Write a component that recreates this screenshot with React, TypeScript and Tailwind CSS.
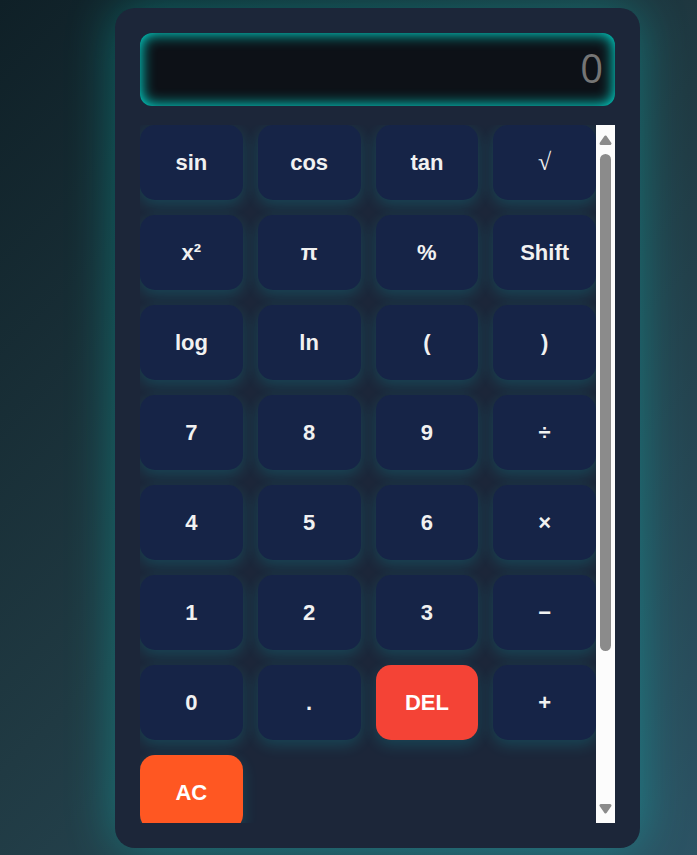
import { useRef, useState } from "react";

const KEYS = [
  "sin", "cos", "tan", "√",
  "x²", "π", "%", "Shift",
  "log", "ln", "(", ")",
  "7", "8", "9", "÷",
  "4", "5", "6", "×",
  "1", "2", "3", "−",
  "0", ".", "DEL", "+",
  "AC",
];

function keyColour(key: string) {
  if (key === "DEL") return "bg-[#f44336] text-white";
  if (key === "AC") return "bg-[#ff5722] text-white";
  return "bg-[#162447] text-[#f1f1f1]";
}

function Key({ label, onPress }: { label: string; onPress: (key: string) => void }) {
  const face =
    label === "√"
      ? "font-['Liberation_Serif',serif] text-2xl font-normal"
      : "font-['Liberation_Sans',Arial,sans-serif] text-[22px] font-bold";
  return (
    <button
      type="button"
      onClick={() => onPress(label)}
      className={`h-[75px] rounded-[15px] pb-px shadow-[0_5px_15px_rgba(0,255,255,0.15)] ${face} ${keyColour(label)}`}
    >
      {label}
    </button>
  );
}

export default function App() {
  const [value, setValue] = useState("");
  const pad = useRef<HTMLDivElement>(null);

  const press = (key: string) => {
    if (key === "AC") setValue("");
    else if (key === "DEL") setValue((v) => v.slice(0, -1));
    else if (key !== "Shift") setValue((v) => v + key);
  };

  return (
    <div className="flex min-h-screen items-center justify-center bg-[linear-gradient(135deg,#0f2027,#203a43,#2c5364)] py-2 pl-[58px]">
      <main className="w-full max-w-[525px] rounded-[20px] bg-[#1c2639] p-[25px] shadow-[0_0_50px_rgba(0,255,240,0.3)]">
        <input
          type="text"
          aria-label="Result"
          placeholder="0"
          readOnly
          value={value}
          className="mb-[19px] block h-[73px] w-full rounded-xl bg-[#0d1117] px-3 pb-1 text-right font-['Open_Sans',sans-serif] text-[40px] text-white shadow-[inset_0_0_15px_#00fff0] outline-none placeholder:text-[#757575]"
        />
        <div className="flex h-[698px]">
          <div
            ref={pad}
            className="grid flex-1 auto-rows-[75px] grid-cols-4 gap-[15px] overflow-y-auto [scrollbar-width:none]"
          >
            {KEYS.map((key) => (
              <Key key={key} label={key} onPress={press} />
            ))}
          </div>
          <div className="flex w-[19px] flex-col items-center bg-[#fcfcfc] text-[#8b8b8b]">
            <button
              type="button"
              aria-label="Scroll up"
              className="flex h-[29px] w-full items-center justify-center"
              onClick={() => pad.current?.scrollBy(0, -40)}
            >
              <svg width="13" height="10" viewBox="0 0 13 10" fill="currentColor" stroke="currentColor" strokeWidth="3" strokeLinejoin="round">
                <path d="M6.500 2 11 8.500H2Z" />
              </svg>
            </button>
            <div className="h-[497px] w-[11px] rounded-full bg-[#8b8b8b]" />
            <button
              type="button"
              aria-label="Scroll down"
              className="mt-auto flex h-[29px] w-full items-center justify-center"
              onClick={() => pad.current?.scrollBy(0, 40)}
            >
              <svg width="13" height="10" viewBox="0 0 13 10" fill="currentColor" stroke="currentColor" strokeWidth="3" strokeLinejoin="round">
                <path d="M6.500 8 2 1.500H11Z" />
              </svg>
            </button>
          </div>
        </div>
      </main>
    </div>
  );
}
